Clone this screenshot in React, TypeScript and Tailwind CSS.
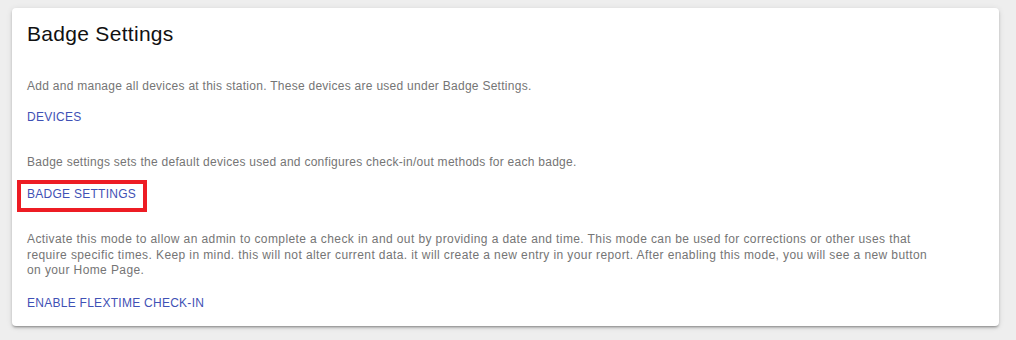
import React from "react";

export default function App() {
  return (
    <div className="min-h-[340px] bg-[#eeeeee] pl-[12px] pr-[17px] pt-[8px] pb-[15px] font-['Liberation_Sans',Arial,sans-serif]">
      <div className="rounded-[4px] bg-white px-[15px] pt-[12px] pb-[15px] shadow-[0_2px_2px_-1px_rgba(0,0,0,0.25),0_2px_3px_0_rgba(0,0,0,0.14),0_1px_6px_0_rgba(0,0,0,0.1)]">
        <h1 className="text-[21px] leading-[28px] tracking-[0.3px] text-[#111111]">Badge Settings</h1>

        <div className="mt-[30px] flex flex-col items-start text-[12px] tracking-[0.27px]">
          <p className="leading-[16px] text-[#757575]">
            Add and manage all devices at this station. These devices are used under Badge Settings.
          </p>
          <a className="mt-[15px] leading-[16px] text-[#3f51b5] uppercase">Devices</a>
        </div>

        <div className="mt-[29px] flex flex-col items-start text-[12px] tracking-[0.27px]">
          <p className="leading-[16px] text-[#757575]">
            Badge settings sets the default devices used and configures check-in/out methods for each badge.
          </p>
          <a className="relative mt-[16px] leading-[16px] text-[#3f51b5] uppercase">
            Badge Settings
            <span className="absolute -top-[6px] -left-[10px] -right-[11px] -bottom-[10px] border-4 border-[#ed1c24]" />
          </a>
        </div>

        <div className="mt-[30px] flex flex-col items-start text-[12px] tracking-[0.27px]">
          <p className="max-w-[908px] leading-[15.5px] tracking-[0.4px] text-[#757575]">
            Activate this mode to allow an admin to complete a check in and out by providing a date and time. This mode can be used for corrections or other uses that require specific times. Keep in mind. this will not alter current data. it will create a new entry in your report. After enabling this mode, you will see a new button on your Home Page.
          </p>
          <a className="mt-[16.5px] leading-[16px] text-[#3f51b5] uppercase">Enable Flextime Check-In</a>
        </div>
      </div>
    </div>
  );
}
